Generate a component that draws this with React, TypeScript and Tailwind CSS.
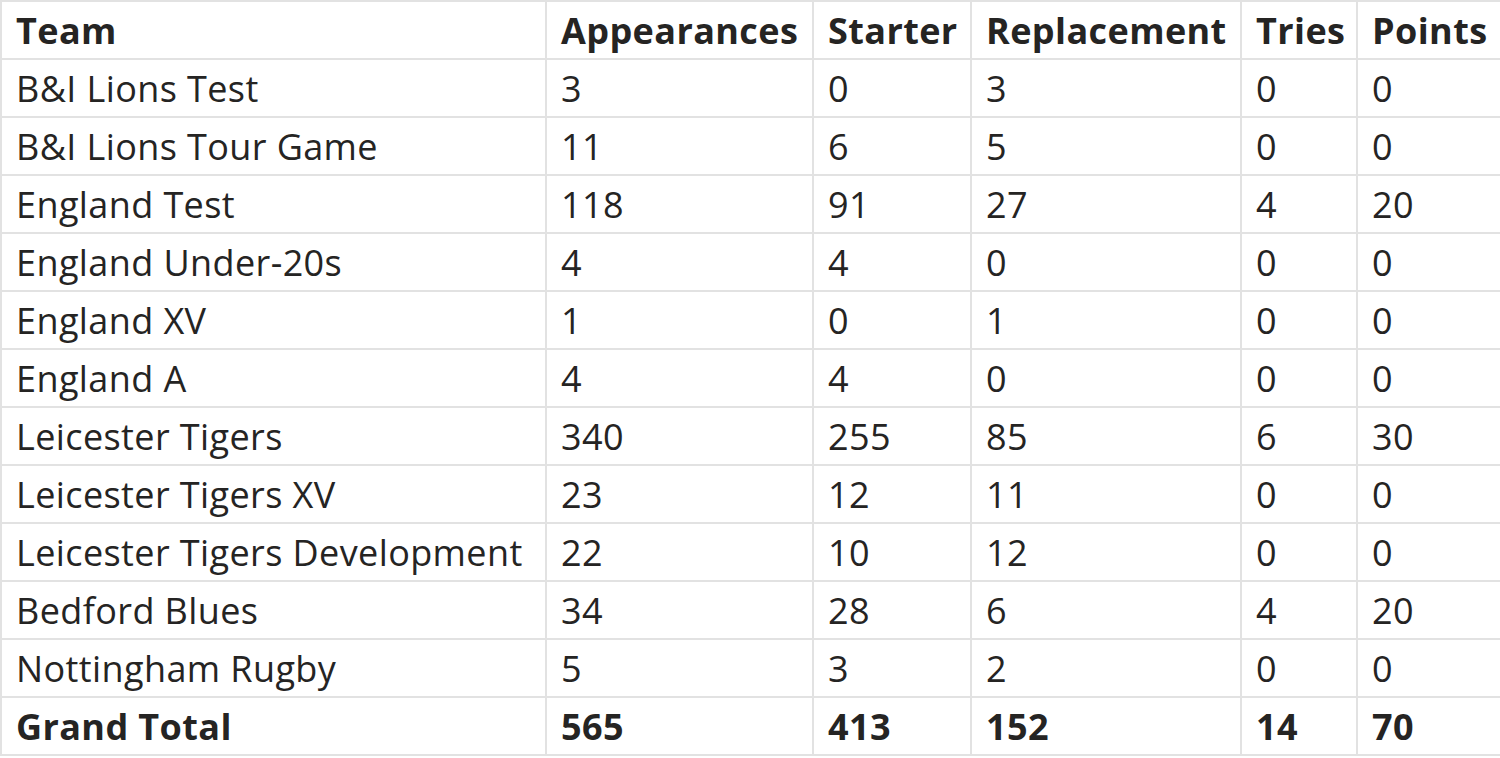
const COLUMNS = ["Team", "Appearances", "Starter", "Replacement", "Tries", "Points"];
const WIDTHS = ["w-[545px]", "w-[267px]", "w-[158px]", "w-[270px]", "w-[116px]", "w-[144px]"];

const ROWS: (string | number)[][] = [
  ["B&I Lions Test", 3, 0, 3, 0, 0],
  ["B&I Lions Tour Game", 11, 6, 5, 0, 0],
  ["England Test", 118, 91, 27, 4, 20],
  ["England Under-20s", 4, 4, 0, 0, 0],
  ["England XV", 1, 0, 1, 0, 0],
  ["England A", 4, 4, 0, 0, 0],
  ["Leicester Tigers", 340, 255, 85, 6, 30],
  ["Leicester Tigers XV", 23, 12, 11, 0, 0],
  ["Leicester Tigers Development", 22, 10, 12, 0, 0],
  ["Bedford Blues", 34, 28, 6, 4, 20],
  ["Nottingham Rugby", 5, 3, 2, 0, 0],
];

const TOTAL = ["Grand Total", 565, 413, 152, 14, 70];

export default function App() {
  return (
    <div className="w-[1500px] h-[758px] overflow-hidden bg-white text-[#252423] font-['Open_Sans',sans-serif]">
      <table className="table-fixed border-collapse w-[1502px] text-[36px] leading-none tracking-[0.4px]">
        <thead>
          <tr className="h-[58px]">
            {COLUMNS.map((c, i) => (
              <th key={c} className={`${WIDTHS[i]} border-2 border-[#e2e2e2] pl-[14px] pt-0.5 text-left font-bold`}>
                {c}
              </th>
            ))}
          </tr>
        </thead>
        <tbody>
          {ROWS.map((row) => (
            <tr key={row[0] as string} className="h-[58px]">
              {row.map((v, i) => (
                <td key={i} className="border-2 border-[#e2e2e2] pl-[14px] pt-0.5 text-left">
                  {v}
                </td>
              ))}
            </tr>
          ))}
          <tr className="h-[58px]">
            {TOTAL.map((v, i) => (
              <td key={i} className="border-2 border-[#e2e2e2] pl-[14px] pt-0.5 text-left font-bold">
                {v}
              </td>
            ))}
          </tr>
        </tbody>
      </table>
    </div>
  );
}
